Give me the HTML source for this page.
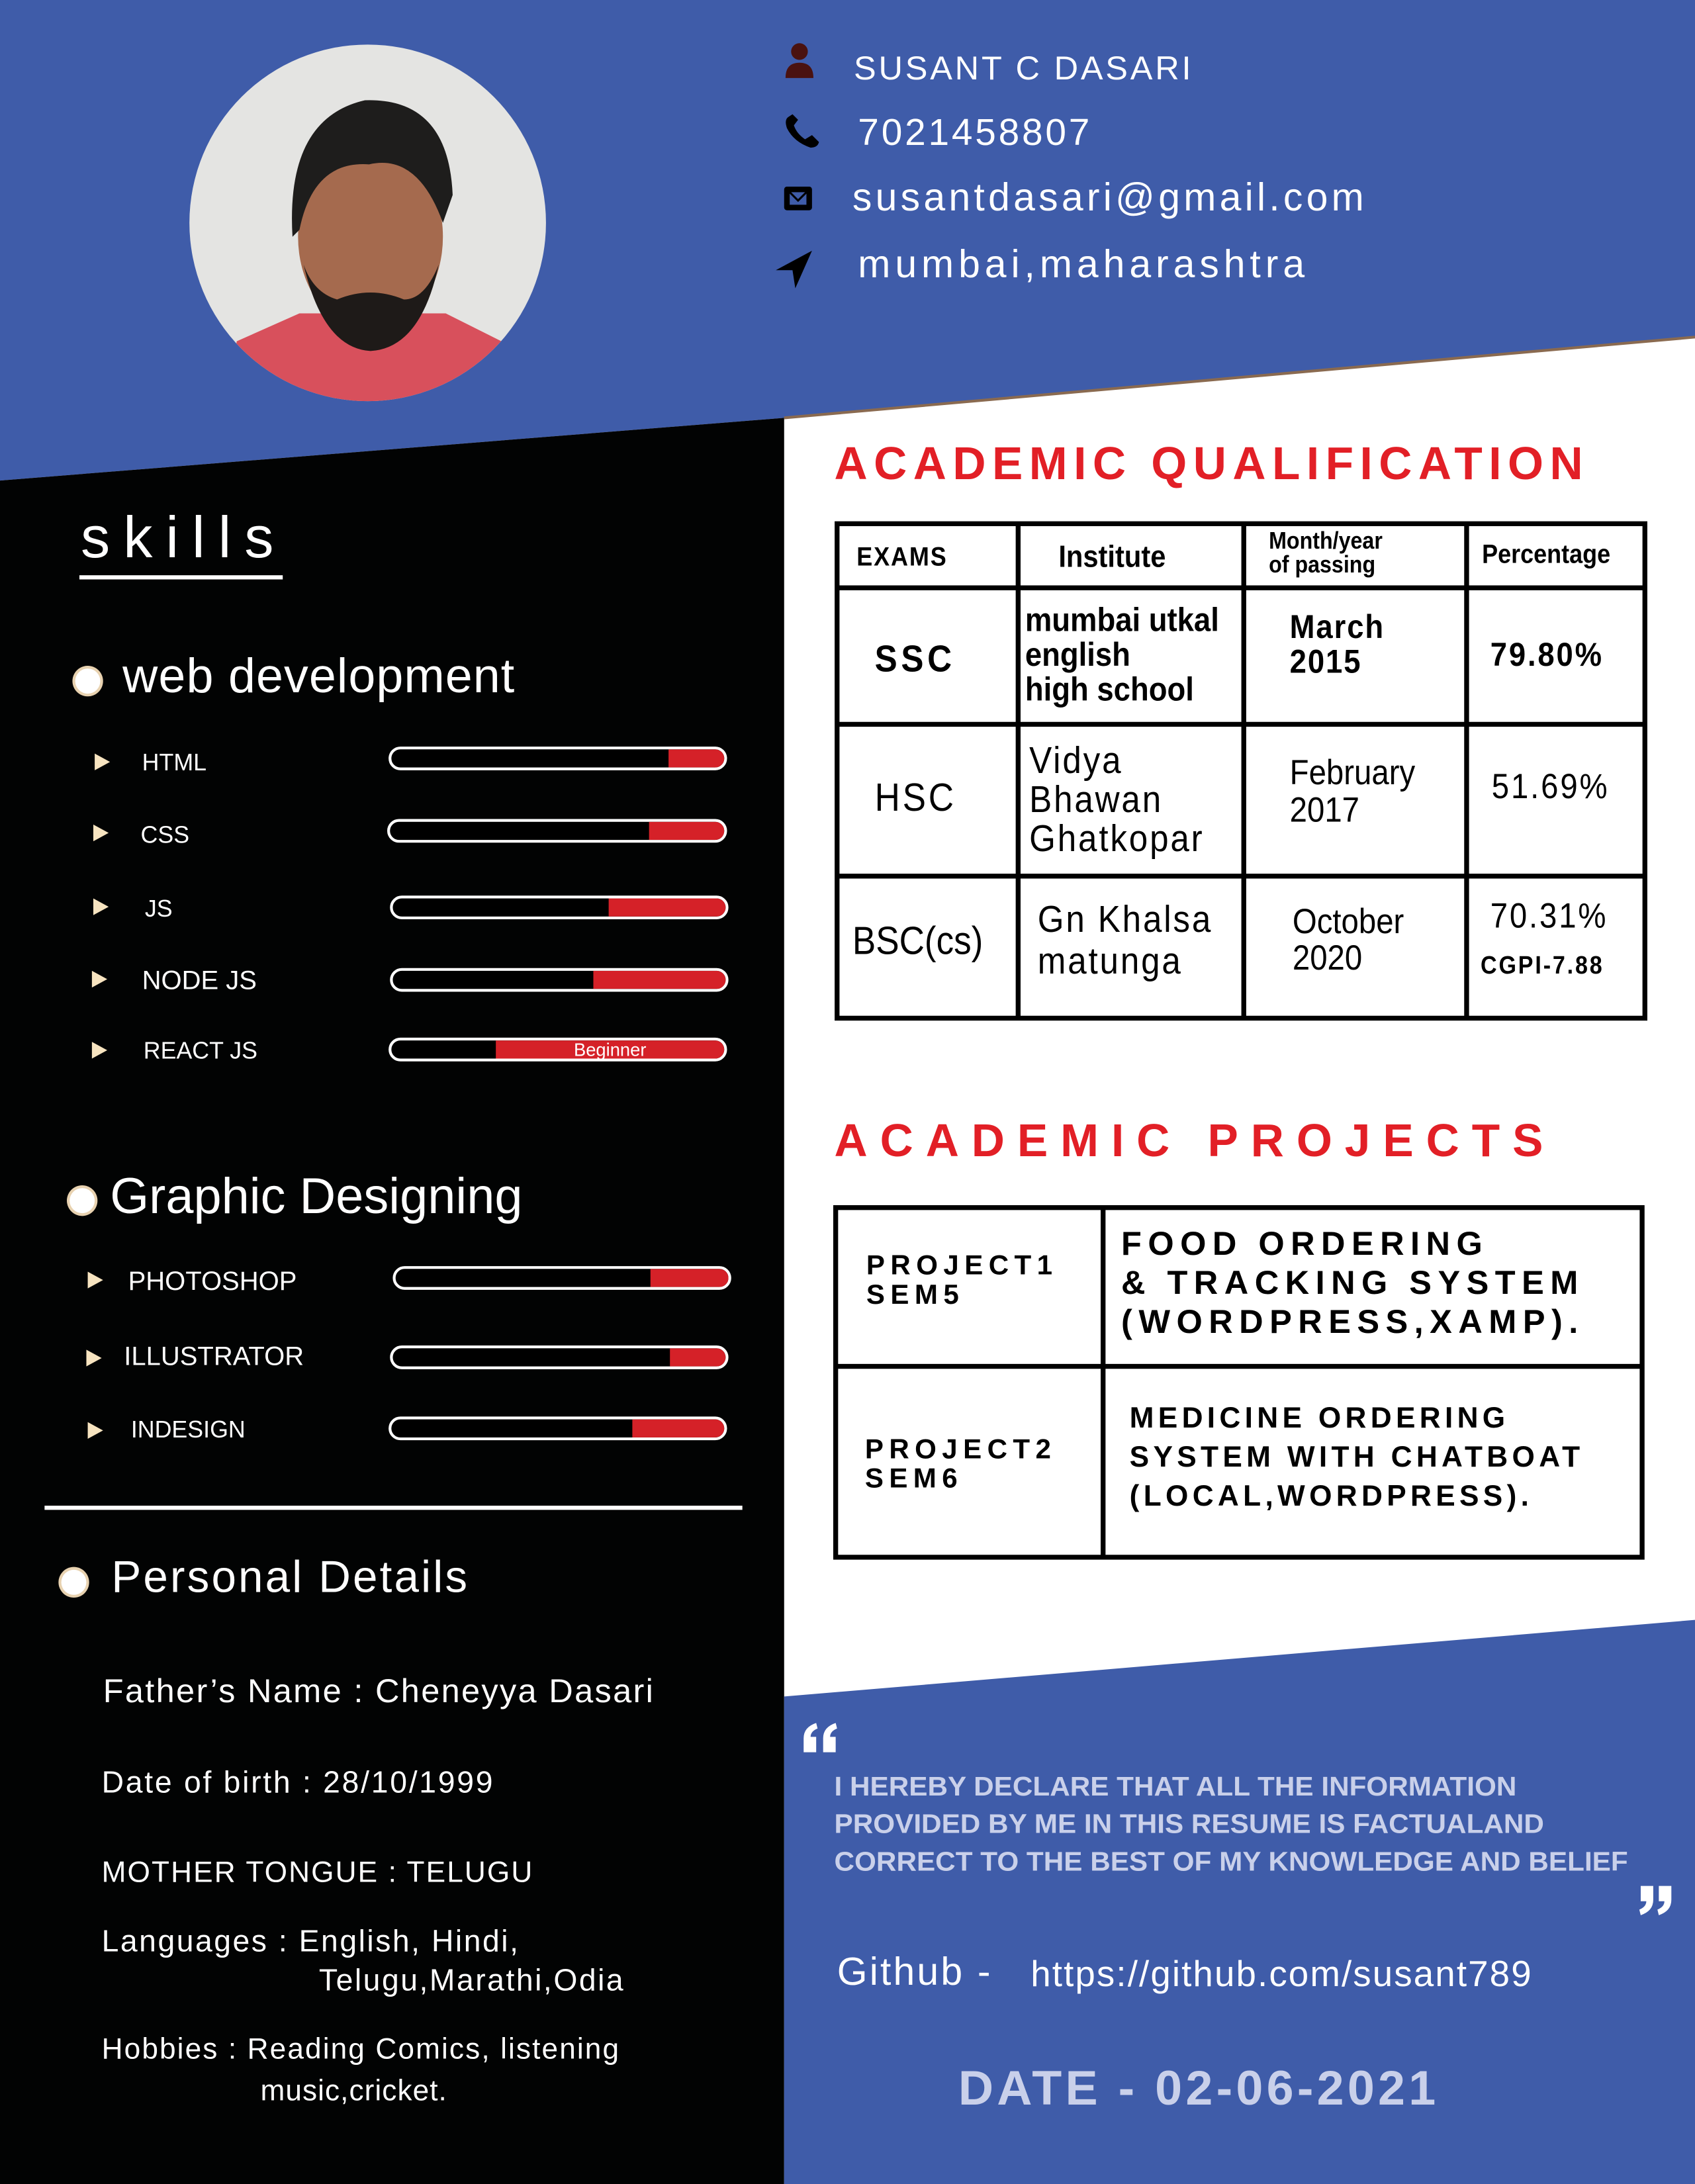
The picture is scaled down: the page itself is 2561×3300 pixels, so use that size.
<!DOCTYPE html>
<html><head><meta charset="utf-8">
<style>
html,body{margin:0;padding:0;background:#fff;width:2561px;height:3300px;overflow:hidden}
#w{position:absolute;left:0;top:0;width:1217px;height:1568px;transform:scale(2.1044,2.1046);transform-origin:0 0;font-family:"Liberation Sans",sans-serif}
.a{position:absolute;white-space:nowrap}
.bar{position:absolute;height:13px;border:2px solid #fff;border-radius:9px;background:#000;overflow:hidden}
.bar i{position:absolute;top:0;bottom:0;right:0;background:#d52128}
.tri{position:absolute;width:0;height:0;border-top:6px solid transparent;border-bottom:6px solid transparent;border-left:11px solid #f7e4c0}
.sk{color:#fff;font-size:17px}
.dot{position:absolute;width:18px;height:18px;border-radius:50%;background:#fff;box-shadow:0 0 0 2px #e8d2b0}
.t{font-weight:bold;color:#000;transform:scaleX(0.9);transform-origin:0 0}
.wt{color:#fff;font-size:19px;letter-spacing:0.5px}
</style></head><body>
<div id="w">
<svg class="a" style="left:0;top:0" width="1217" height="1568">
<rect x="0" y="0" width="1217" height="1568" fill="#fff"/>
<polygon points="0,0 1217,0 1217,242 563,300 0,345" fill="#3f5ca9"/>
<polygon points="0,345 563,300 563,1568 0,1568" fill="#020303"/>
<polygon points="563,1218 1217,1163 1217,1568 563,1568" fill="#3f5ca9"/>
<line x1="563" y1="300" x2="1217" y2="242" stroke="#8a6a50" stroke-width="2"/>
<defs><clipPath id="c"><ellipse cx="264" cy="160" rx="128" ry="128"/></clipPath></defs>
<g clip-path="url(#c)">
<rect x="130" y="30" width="270" height="270" fill="#e4e4e2"/>
<path d="M160 300 L170 245 L215 225 L320 225 L370 250 L380 300Z" fill="#d8505c"/>
<ellipse cx="266" cy="170" rx="52" ry="68" fill="#a56a4e"/>
<path d="M210 170 Q205 85 262 72 Q322 70 325 140 L318 160 Q300 110 265 118 Q225 115 215 165Z" fill="#1e1d1c"/>
<path d="M218 190 Q232 250 266 252 Q302 250 315 190 Q305 215 290 215 Q266 205 242 215 Q225 210 218 190Z" fill="#1e1a18"/>
</g>
<circle cx="574" cy="37" r="6" fill="#4a1210"/>
<path d="M564 56 Q564 45 574 45 Q584 45 584 56Z" fill="#4a1210"/>
<path d="M566 84 Q563 86 565 92 Q570 102 582 106 Q587 106 588 102 L583 97 L578 100 Q572 96 570 90 L573 86 L569 82Z" fill="#000"/>
<rect x="563" y="134" width="20" height="17" rx="2" fill="#000"/>
<rect x="567" y="138" width="12" height="9" fill="#3f5ca9"/><path d="M567 138 L573 144 L579 138" stroke="#000" stroke-width="1.5" fill="none"/>
<path d="M583 180 L557 194 L569 194 L571 207Z" fill="#000"/>
<!-- quote marks -->
<g fill="#fff">
<path d="M577 1258 L577 1248 Q577 1240 586 1237 L587 1241 Q582 1243 582 1247 L586 1247 L586 1258Z"/>
<path d="M591 1258 L591 1248 Q591 1240 600 1237 L601 1241 Q596 1243 596 1247 L600 1247 L600 1258Z"/>
<path d="M1187 1354 L1187 1364 Q1187 1372 1178 1375 L1177 1371 Q1182 1369 1182 1365 L1178 1365 L1178 1354Z"/>
<path d="M1200 1354 L1200 1364 Q1200 1372 1191 1375 L1190 1371 Q1195 1369 1195 1365 L1191 1365 L1191 1354Z"/>
</g>
</svg>
<div class="a wt" style="left:613px;top:36px;font-size:24px;letter-spacing:1.8px">SUSANT C DASARI</div>
<div class="a wt" style="left:616px;top:80px;font-size:27px;letter-spacing:1.8px">7021458807</div>
<div class="a wt" style="left:612px;top:126px;font-size:28px;letter-spacing:2.5px">susantdasari@gmail.com</div>
<div class="a wt" style="left:616px;top:174px;font-size:28px;letter-spacing:3.3px">mumbai,maharashtra</div>

<div class="a" style="left:58px;top:362px;color:#fff;font-size:42px;letter-spacing:9.5px">skills</div>
<div class="a" style="left:57px;top:413px;width:146px;height:3px;background:#fff"></div>
<div class="dot" style="left:54px;top:480px"></div>
<div class="a" style="left:88px;top:466px;color:#fff;font-size:35px;letter-spacing:0.5px">web development</div>

<div class="tri" style="left:68px;top:541px"></div><div class="a sk" style="left:102px;top:538px">HTML</div>
<div class="bar" style="left:279px;top:536px;width:239px"><i style="width:40px"></i></div>
<div class="tri" style="left:67px;top:592px"></div><div class="a sk" style="left:101px;top:590px">CSS</div>
<div class="bar" style="left:278px;top:588px;width:240px"><i style="width:54px"></i></div>
<div class="tri" style="left:67px;top:645px"></div><div class="a sk" style="left:104px;top:643px">JS</div>
<div class="bar" style="left:280px;top:643px;width:239px"><i style="width:84px"></i></div>
<div class="tri" style="left:66px;top:697px"></div><div class="a sk" style="left:102px;top:694px;font-size:19px">NODE JS</div>
<div class="bar" style="left:280px;top:695px;width:239px"><i style="width:95px"></i></div>
<div class="tri" style="left:66px;top:748px"></div><div class="a sk" style="left:103px;top:745px">REACT JS</div>
<div class="bar" style="left:279px;top:745px;width:239px"><i style="width:164px;color:#fff;font-size:13px;font-style:normal;text-align:center;line-height:13px">Beginner</i></div>

<div class="dot" style="left:50px;top:853px"></div>
<div class="a" style="left:79px;top:838px;color:#fff;font-size:36px">Graphic Designing</div>
<div class="tri" style="left:63px;top:913px"></div><div class="a sk" style="left:92px;top:910px;font-size:19px">PHOTOSHOP</div>
<div class="bar" style="left:282px;top:909px;width:239px"><i style="width:56px"></i></div>
<div class="tri" style="left:62px;top:969px"></div><div class="a sk" style="left:89px;top:964px;font-size:19px">ILLUSTRATOR</div>
<div class="bar" style="left:280px;top:966px;width:239px"><i style="width:40px"></i></div>
<div class="tri" style="left:63px;top:1021px"></div><div class="a sk" style="left:94px;top:1017px">INDESIGN</div>
<div class="bar" style="left:279px;top:1017px;width:239px"><i style="width:66px"></i></div>

<div class="a" style="left:32px;top:1081px;width:501px;height:3px;background:#fff"></div>
<div class="dot" style="left:44px;top:1127px"></div>
<div class="a" style="left:80px;top:1114px;color:#fff;font-size:32px;letter-spacing:1.5px">Personal Details</div>
<div class="a wt" style="left:74px;top:1201px;font-size:24px;letter-spacing:1.1px">Father’s Name : Cheneyya Dasari</div>
<div class="a wt" style="left:73px;top:1267px;font-size:22px;letter-spacing:1.3px">Date of birth : 28/10/1999</div>
<div class="a wt" style="left:73px;top:1333px;font-size:21px;letter-spacing:1px">MOTHER TONGUE : TELUGU</div>
<div class="a wt" style="left:73px;top:1381px;font-size:22px;letter-spacing:1.2px">Languages : English, Hindi,</div>
<div class="a wt" style="left:229px;top:1409px;font-size:22px;letter-spacing:1.2px">Telugu,Marathi,Odia</div>
<div class="a wt" style="left:73px;top:1460px;font-size:21px;letter-spacing:1px">Hobbies : Reading Comics, listening</div>
<div class="a wt" style="left:187px;top:1490px;font-size:21px">music,cricket.</div>

<div class="a" style="left:599px;top:314px;color:#e21f26;font-size:33px;font-weight:bold;letter-spacing:4.5px">ACADEMIC QUALIFICATION</div>
<svg class="a" style="left:598px;top:373px" width="586" height="362">
<g stroke="#000" stroke-width="3.5" fill="none">
<rect x="3" y="3" width="580" height="355"/>
<line x1="133" y1="3" x2="133" y2="358"/><line x1="295" y1="3" x2="295" y2="358"/><line x1="455" y1="3" x2="455" y2="358"/>
<line x1="3" y1="49" x2="583" y2="49"/><line x1="3" y1="147" x2="583" y2="147"/><line x1="3" y1="256" x2="583" y2="256"/>
</g></svg>
<div class="a t" style="left:615px;top:390px;font-size:19px;letter-spacing:1px">EXAMS</div>
<div class="a t" style="left:760px;top:387px;font-size:22px">Institute</div>
<div class="a t" style="left:911px;top:380px;font-size:17px;line-height:17px">Month/year<br>of passing</div>
<div class="a t" style="left:1064px;top:388px;font-size:19px">Percentage</div>
<div class="a t" style="left:628px;top:458px;font-size:27px;letter-spacing:3px">SSC</div>
<div class="a t" style="left:736px;top:433px;font-size:24px;line-height:25px">mumbai utkal<br>english<br>high school</div>
<div class="a t" style="left:926px;top:438px;font-size:24px;line-height:25px;letter-spacing:1px">March<br>2015</div>
<div class="a t" style="left:1070px;top:457px;font-size:24px;letter-spacing:1.5px">79.80%</div>
<div class="a t" style="left:628px;top:557px;font-size:28px;font-weight:normal;letter-spacing:2px">HSC</div>
<div class="a t" style="left:739px;top:532px;font-size:27px;line-height:28px;font-weight:normal;letter-spacing:1.5px">Vidya<br>Bhawan<br>Ghatkopar</div>
<div class="a t" style="left:926px;top:542px;font-size:25px;line-height:27px;font-weight:normal">February<br>2017</div>
<div class="a t" style="left:1071px;top:551px;font-size:25px;font-weight:normal;letter-spacing:1.5px">51.69%</div>
<div class="a t" style="left:612px;top:660px;font-size:28px;font-weight:normal">BSC(cs)</div>
<div class="a t" style="left:745px;top:645px;font-size:27px;line-height:30px;font-weight:normal;letter-spacing:1.5px">Gn Khalsa<br>matunga</div>
<div class="a t" style="left:928px;top:649px;font-size:25px;line-height:26px;font-weight:normal">October<br>2020</div>
<div class="a t" style="left:1070px;top:644px;font-size:25px;font-weight:normal;letter-spacing:1.5px">70.31%</div>
<div class="a t" style="left:1063px;top:683px;font-size:18px;letter-spacing:1.5px">CGPI-7.88</div>

<div class="a" style="left:599px;top:800px;color:#e21f26;font-size:33px;font-weight:bold;letter-spacing:9px">ACADEMIC PROJECTS</div>
<svg class="a" style="left:597px;top:864px" width="585" height="258">
<g stroke="#000" stroke-width="3.5" fill="none">
<rect x="3" y="3" width="579" height="251"/>
<line x1="195" y1="3" x2="195" y2="254"/><line x1="3" y1="117" x2="582" y2="117"/>
</g></svg>
<div class="a t" style="left:622px;top:899px;font-size:20px;line-height:21px;letter-spacing:4px;transform:none">PROJECT1<br>SEM5</div>
<div class="a t" style="left:805px;top:880px;font-size:24px;line-height:28px;letter-spacing:4.5px;transform:none">FOOD ORDERING<br>&amp; TRACKING SYSTEM<br>(WORDPRESS,XAMP).</div>
<div class="a t" style="left:621px;top:1031px;font-size:20px;line-height:21px;letter-spacing:4px;transform:none">PROJECT2<br>SEM6</div>
<div class="a t" style="left:811px;top:1005px;font-size:21px;line-height:28px;letter-spacing:3px;transform:none">MEDICINE ORDERING<br>SYSTEM WITH CHATBOAT<br>(LOCAL,WORDPRESS).</div>

<div class="a" style="left:599px;top:1270px;color:#c9d0ea;font-size:19.5px;font-weight:bold;line-height:27px;transform:scaleX(1.03);transform-origin:0 0">I HEREBY DECLARE THAT ALL THE INFORMATION<br>PROVIDED BY ME IN THIS RESUME IS FACTUALAND<br>CORRECT TO THE BEST OF MY KNOWLEDGE AND BELIEF</div>
<div class="a" style="left:601px;top:1400px;color:#fff;font-size:28px;letter-spacing:1.5px">Github -</div>
<div class="a" style="left:740px;top:1402px;color:#fff;font-size:26px;letter-spacing:1px">https://github.com/susant789</div>
<div class="a" style="left:688px;top:1480px;color:#c9d0ea;font-size:35px;font-weight:bold;letter-spacing:2.5px">DATE - 02-06-2021</div>
</div>
</body></html>
